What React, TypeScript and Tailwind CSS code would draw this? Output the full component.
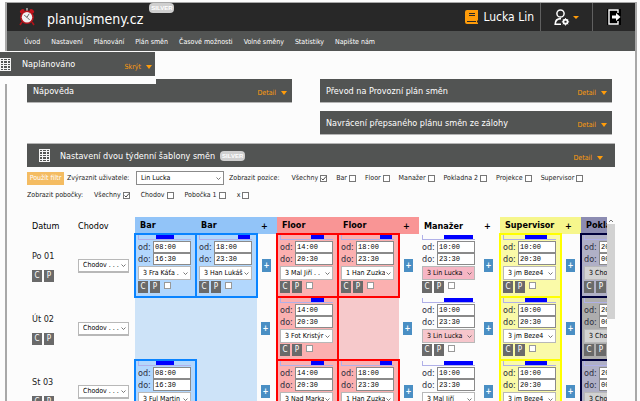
import clsx from "clsx";

interface Shift {
  from: string;
  to: string;
  user: string;
  barClass: string;
  cellClass: string;
  selectClass?: string;
}

interface Slot {
  emptyClass: string;
  shift?: Shift;
}

interface Day {
  label: string;
  groups: Slot[][];
}

const MENU = ["Úvod", "Nastavení", "Plánování", "Plán směn", "Časové možnosti", "Volné směny", "Statistiky", "Napište nám"];

const POSITIONS = ["Všechny", "Bar", "Floor", "Manažer", "Pokladna 2", "Projekce", "Supervisor"];
const BRANCHES = ["Všechny", "Chodov", "Pobočka 1", "x"];

const HEADINGS = [
  { name: "Bar", slots: 2, className: "bg-[#92c4f8]" },
  { name: "Floor", slots: 2, className: "bg-[#f99595]" },
  { name: "Manažer", slots: 1, className: "" },
  { name: "Supervisor", slots: 1, className: "bg-[#f6f68c]" },
  { name: "Pokladna", slots: 1, className: "bg-[#8c8cb2]" },
];
const LAST = HEADINGS.length - 1;

const BLUE = "border-2 border-[#0a84ff] bg-[#b2d7fd]";
const RED = "border-2 border-[#ff0000] bg-[#fbb0b0]";
const YELLOW = "border-2 border-[#ffff00] bg-[#fafaa8]";
const NAVY = "border-2 border-[#00003c] bg-[#b0b0c6]";
const GRAY = "border-2 border-[#00003c] bg-[#adadad]";

const bar1 = (user: string): Shift => ({ from: "08:00", to: "16:30", user, barClass: "ml-[17px] w-[18px]", cellClass: BLUE });
const bar2 = (user: string): Shift => ({ from: "18:00", to: "23:30", user, barClass: "ml-[38px] w-[12px]", cellClass: BLUE });
const floor1 = (user: string): Shift => ({ from: "14:00", to: "20:30", user, barClass: "ml-[30px] w-[13px]", cellClass: RED });
const floor2 = (user: string): Shift => ({ from: "18:00", to: "23:30", user, barClass: "ml-[38px] w-[12px]", cellClass: RED });
const manager = (user: string, selectClass?: string): Shift => ({
  from: "10:00", to: "23:30", user, barClass: "ml-[21px] w-[29px]", cellClass: "pt-px pl-px", selectClass,
});
const supervisor: Shift = { from: "10:00", to: "20:30", user: "3 jm Beze4", barClass: "ml-[21px] w-[22px]", cellClass: YELLOW };
const cashier = (cellClass: string): Shift => ({
  from: "20:00", to: "00:30", user: "3 Cho", barClass: "hidden", cellClass, selectClass: "bg-[#d2d2d2]",
});

const BLUE_EMPTY = "bg-[#cde3f8]";
const RED_EMPTY = "bg-[#f6c9cb]";

const DAYS: Day[] = [
  {
    label: "Po 01",
    groups: [
      [{ emptyClass: BLUE_EMPTY, shift: bar1("3 Fra Káťa .") }, { emptyClass: BLUE_EMPTY, shift: bar2("3 Han Lukáš") }],
      [{ emptyClass: RED_EMPTY, shift: floor1("3 Mal Jiří . .") }, { emptyClass: RED_EMPTY, shift: floor2("1 Han Zuzka") }],
      [{ emptyClass: "", shift: manager("3 Lin Lucka", "bg-[#f6b6c4]") }],
      [{ emptyClass: "", shift: supervisor }],
      [{ emptyClass: "", shift: cashier(NAVY) }],
    ],
  },
  {
    label: "Út 02",
    groups: [
      [{ emptyClass: BLUE_EMPTY }, { emptyClass: BLUE_EMPTY }],
      [{ emptyClass: RED_EMPTY, shift: floor1("3 Fot Kristýr") }, { emptyClass: RED_EMPTY }],
      [{ emptyClass: "", shift: manager("3 Lin Lucka", "bg-[#f6c6cc]") }],
      [{ emptyClass: "", shift: supervisor }],
      [{ emptyClass: "", shift: cashier(GRAY) }],
    ],
  },
  {
    label: "St 03",
    groups: [
      [{ emptyClass: BLUE_EMPTY, shift: bar1("3 Ful Martin") }, { emptyClass: BLUE_EMPTY }],
      [{ emptyClass: RED_EMPTY, shift: floor1("3 Nad Marka") }, { emptyClass: RED_EMPTY, shift: floor2("1 Han Zuzka") }],
      [{ emptyClass: "", shift: manager("3 Mal Jiří") }],
      [{ emptyClass: "", shift: supervisor }],
      [{ emptyClass: "", shift: cashier(NAVY) }],
    ],
  },
];

function Caret() {
  return (
    <svg viewBox="0 0 6 4" className="w-[6px] h-[4px] shrink-0 fill-[#ff9c0a]">
      <path d="M0 0h6L3 4z" />
    </svg>
  );
}

function GridIcon() {
  return (
    <svg viewBox="0 0 11 13" className="w-[11px] h-[13px] shrink-0">
      <rect width="11" height="13" fill="#f4f4f4" />
      <path
        fill="#525453"
        d="M1 1h2v1H1zM4 1h3v1H4zM8 1h2v1H8zM1 3h2v2H1zM4 3h3v2H4zM8 3h2v2H8zM1 6h2v1H1zM4 6h3v1H4zM8 6h2v1H8zM1 8h2v2H1zM4 8h3v2H4zM8 8h2v2H8zM1 11h2v1H1zM4 11h3v1H4zM8 11h2v1H8z"
      />
    </svg>
  );
}

function ClockLogo() {
  return (
    <svg viewBox="0 0 16 18" className="w-4 h-[18px] shrink-0">
      <path d="M3 14l-2 3M13 14l2 3" stroke="#b01218" strokeWidth="1.6" />
      <ellipse cx="3.2" cy="3.2" rx="2.6" ry="1.8" fill="#c4141c" transform="rotate(-40 3.2 3.2)" />
      <ellipse cx="12.8" cy="3.2" rx="2.6" ry="1.8" fill="#c4141c" transform="rotate(40 12.8 3.2)" />
      <path d="M7 0h2v3H7z" fill="#8c8c8c" />
      <circle cx="8" cy="9.3" r="6.8" fill="#b8141c" />
      <circle cx="8" cy="9.3" r="5.2" fill="#f2f2f2" />
      <path d="M8 9.3L5.2 7.2M8 9.3l2.2-3.6M8 9.3l2.6 2.6" stroke="#333" strokeWidth="0.7" fill="none" />
    </svg>
  );
}

function Badge() {
  return (
    <span className="block shrink-0 rounded bg-[#cfcfcf] px-[2px] font-['Liberation_Sans',sans-serif] text-[6px] leading-[10px] font-bold text-white">
      SILVER
    </span>
  );
}

function Panel({ title, className }: { title: string; className?: string }) {
  return (
    <section className={clsx("flex h-6 items-center justify-between bg-[#525453] border-b border-[#b4b4b4] pl-[6px] pr-[5px]", className)}>
      <h2 className="text-[9px] text-white">{title}</h2>
      <button className="mt-[5px] flex items-center gap-[5px] text-[7px] text-[#ff9c0a]">Detail <Caret /></button>
    </section>
  );
}

function Select({ value, label, className }: { value: string; label: string; className?: string }) {
  return (
    <div className={clsx("relative", className)}>
      <select
        aria-label={label}
        className="block size-full appearance-none overflow-hidden bg-transparent pl-1 pr-2 text-[7px] leading-[10px] text-black"
      >
        <option>{value}</option>
      </select>
      <svg viewBox="0 0 5 3" className="pointer-events-none absolute right-[2px] top-1/2 -mt-px h-[3px] w-[5px]">
        <path d="M0.5 0.5l2 2 2-2" fill="none" stroke="#555" strokeWidth="0.8" />
      </svg>
    </div>
  );
}

function Check({ label, checked }: { label: string; checked?: boolean }) {
  return (
    <label className="flex items-center gap-[2px]">
      {label}
      <span className="relative size-[7px]">
        <input type="checkbox" defaultChecked={checked} className="block size-[7px] appearance-none border border-[#777] bg-white" />
        {checked && (
          <svg viewBox="0 0 7 7" className="pointer-events-none absolute inset-0 size-[7px]">
            <path d="M1.5 3.5l1.500 1.5 3-3.5" fill="none" stroke="#333" strokeWidth="0.9" />
          </svg>
        )}
      </span>
    </label>
  );
}

function CopyPaste() {
  return (
    <>
      <button className="h-3 w-[10px] bg-[#6a6a6a] text-[8px] leading-3 text-white">C</button>
      <button className="h-3 w-[10px] bg-[#6a6a6a] text-[8px] leading-3 text-white">P</button>
    </>
  );
}

function TimeRow({ label, value }: { label: string; value: string }) {
  return (
    <label className="flex h-3 items-center justify-between text-[9px] leading-3 text-[#2c2c3c]">
      {label}
      <input
        defaultValue={value}
        className="h-3 w-[38px] border border-[#8a8a8a] bg-white pl-px font-['Liberation_Mono',monospace] text-[7px] leading-[10px] text-black"
      />
    </label>
  );
}

function ShiftForm({ shift }: { shift: Shift }) {
  return (
    <div className="ml-[2px] w-[53px]">
      <div className="mb-px h-[5px] border-b border-l border-[#b0b0e8]">
        <div className={clsx("h-1 bg-[#0000ff]", shift.barClass)} />
      </div>
      <TimeRow label="od:" value={shift.from} />
      <TimeRow label="do:" value={shift.to} />
      <Select
        value={shift.user}
        label="Uživatel"
        className={clsx("mt-px h-[14px] border border-[#b8b8b8]", shift.selectClass ?? "bg-white")}
      />
      <div className="mt-px flex gap-[2px]">
        <CopyPaste />
        <input type="checkbox" aria-label="Vybrat směnu" className="ml-[2px] mt-px size-[7px] appearance-none border border-[#999] bg-white" />
      </div>
    </div>
  );
}

function Schedule() {
  return (
    <table className="w-[615px] table-fixed border-collapse">
      <colgroup>
        <col className="w-[51px]" />
        <col className="w-[57px]" />
        {HEADINGS.map((h, g) => [
          ...Array.from({ length: h.slots }, (_, i) => <col key={h.name + i} className="w-[61px]" />),
          g < LAST && <col key={h.name} className="w-[20px]" />,
        ])}
      </colgroup>
      <thead>
        <tr className="h-[17px] text-left text-[9px] text-black">
          <th className="pl-[5px] font-normal">Datum</th>
          <th className="font-normal">Chodov</th>
          {HEADINGS.map((h, g) => [
            ...Array.from({ length: h.slots }, (_, i) => (
              <th key={h.name + i} className={clsx("pl-[5px] font-bold", h.className)}>{h.name}</th>
            )),
            g < LAST && <th key={h.name} className={clsx("pl-1 font-bold", h.className)}>+</th>,
          ])}
        </tr>
      </thead>
      <tbody>
        {DAYS.map(day => (
          <tr key={day.label} className="h-[63px]">
            <td className="pl-[5px] text-[9px]">
              <div className="mb-2">{day.label}</div>
              <div className="flex gap-[2px]"><CopyPaste /></div>
            </td>
            <td>
              <Select value="Chodov . . ." label="Pobočka" className="h-[14px] w-[51px] border border-b-2 border-[#b8b8b8] bg-white" />
            </td>
            {day.groups.map((slots, g) => [
              ...slots.map((slot, i) => (
                <td key={`${g}-${i}`} className={clsx("align-top", slot.shift ? slot.shift.cellClass : slot.emptyClass)}>
                  {slot.shift && <ShiftForm shift={slot.shift} />}
                </td>
              )),
              g < LAST && (
                <td key={g} className="pl-1">
                  <button className="block h-[13px] w-[9px] bg-[#4a8fc4] text-[8px] leading-3 font-bold text-white">+</button>
                </td>
              ),
            ])}
          </tr>
        ))}
      </tbody>
    </table>
  );
}

export default function App() {
  return (
    <div className="relative h-screen overflow-hidden bg-[#fcfcfc] pl-[5px] pr-[3px] pt-[2px] font-['DejaVu_Sans_Condensed','DejaVu_Sans',sans-serif] leading-3 text-[#222]">
      <div className="flex h-full flex-col border-x-2 border-t border-[#a8a8a8]">
        <header className="flex h-7 shrink-0 items-stretch bg-[#282828] text-white">
          <div className="flex flex-1 items-center pl-3">
            <ClockLogo />
            <h1 className="ml-3 mr-[6px] pt-[3px] text-[14px] leading-5">planujsmeny.cz</h1>
            <div className="self-start"><Badge /></div>
          </div>
          <div className="flex items-center gap-[5px] pr-[6px] text-[12px]">
            <svg viewBox="0 0 13 14" className="h-[14px] w-[13px]">
              <path fill="#ff9c0a" d="M2 0h11v10.5h-1v2h1V14H2a2 2 0 0 1-2-2V2a2 2 0 0 1 2-2z" />
              <path stroke="#282828" d="M4 3.5h6M4 5.5h6M2 11.5h9" />
            </svg>
            Lucka Lin
          </div>
          <button className="flex w-[52px] items-center justify-center gap-[3px] border-l border-[#606060]" aria-label="Účet">
            <svg viewBox="0 0 16 17" className="h-[17px] w-4 fill-none stroke-white">
              <circle cx="6.5" cy="4.5" r="3.6" strokeWidth="1.5" />
              <path d="M7 15.2H1.2c0-4 1.8-5.6 5.8-5.6" strokeWidth="1.6" />
              <circle cx="11.5" cy="12.8" r="2.2" strokeWidth="1.6" />
              <path d="M11.5 9v7.6M7.8 12.8h7.4M9 10.3l5 5M14 10.3l-5 5" strokeWidth="0.8" />
              <circle cx="11.5" cy="12.8" r="1" fill="#282828" stroke="none" />
            </svg>
            <svg viewBox="0 0 6 3" className="h-[3px] w-[6px] fill-[#ff9c0a]"><path d="M0 0h6L3 3z" /></svg>
          </button>
          <button className="flex w-[43px] items-center justify-center border-l border-[#606060]" aria-label="Odhlásit">
            <svg viewBox="0 0 14 16" className="h-4 w-[14px]">
              <rect width="14" height="16" fill="#000" />
              <path d="M11 4V1H2v14h9v-3" fill="none" stroke="#fff" strokeWidth="1.4" />
              <path d="M5 6.5h4V4l4.5 4L9 12V9.5H5z" fill="#fff" />
            </svg>
          </button>
        </header>

        <nav className="flex h-5 shrink-0 items-center gap-[11px] bg-[#525453] pl-[17px] pt-px text-[7px]">
          {MENU.map(item => <a key={item} href="#" className="text-white">{item}</a>)}
        </nav>

        <main className="flex min-h-0 flex-1 flex-col pl-5 pr-5 pt-7">
          <div className="mr-[3px] grid grid-cols-[265fr_292fr] gap-x-7 gap-y-2">
            <Panel title="Nápověda" />
            <Panel title="Převod na Provozní plán směn" />
            <Panel title="Navrácení přepsaného plánu směn ze zálohy" className="col-start-2" />
          </div>

          <section className="mt-2 flex h-6 shrink-0 items-center border-t border-[#b4b4b4] bg-[#525453] px-3">
            <GridIcon />
            <h2 className="ml-[10px] mr-[5px] text-[9px] text-white">Nastavení dvou týdenní šablony směn</h2>
            <Badge />
            <button className="ml-auto mt-1 flex items-center gap-[5px] text-[7px] text-[#ff9c0a]">Detail <Caret /></button>
          </section>

          <form className="shrink-0 text-[7px]">
            <div className="mt-1 flex h-[14px] items-center gap-[9px] whitespace-nowrap">
              <div className="flex items-center gap-[3px]">
                <button type="button" className="h-[13px] w-[37px] bg-[#f4bc62] text-[7px] text-white">Použít filtr</button>
                <span className="w-[66px]">Zvýraznit uživatele:</span>
                <Select value="Lin Lucka" label="Zvýraznit uživatele" className="h-[14px] w-[88px] border border-[#8a8a8a] bg-white" />
              </div>
              <span className="-ml-1 mr-[3px]">Zobrazit pozice:</span>
              {POSITIONS.map((p, i) => <Check key={p} label={p} checked={i === 0} />)}
            </div>
            <div className="mt-1 flex h-3 items-center gap-[11px]">
              <span>Zobrazit pobočky:</span>
              {BRANCHES.map((b, i) => <Check key={b} label={b} checked={i === 0} />)}
            </div>
          </form>

          <div className="mt-4 flex min-h-0 flex-1">
            <div className="min-w-0 flex-1 overflow-hidden">
              <Schedule />
            </div>
            <div className="w-2">
              <svg viewBox="0 0 8 7" className="h-[7px] w-2"><path d="M2 5l2-2 2 2" fill="none" stroke="#777" /></svg>
              <div className="h-[95px] bg-[#d2d2d2]" />
            </div>
          </div>
        </main>
      </div>

      {/* docked shift summary */}
      <aside className="absolute left-0 top-[51px] w-[156px] bg-[#fcfcfc] pb-2 pr-px pt-px">
        <div className="flex h-6 items-center bg-[#525453] pr-[3px]">
          <GridIcon />
          <h2 className="ml-[11px] text-[9px] text-white">Naplánováno</h2>
          <button className="ml-auto mt-[5px] flex items-center gap-[5px] text-[7px] text-[#ff9c0a]">Skrýt <Caret /></button>
        </div>
      </aside>
    </div>
  );
}
